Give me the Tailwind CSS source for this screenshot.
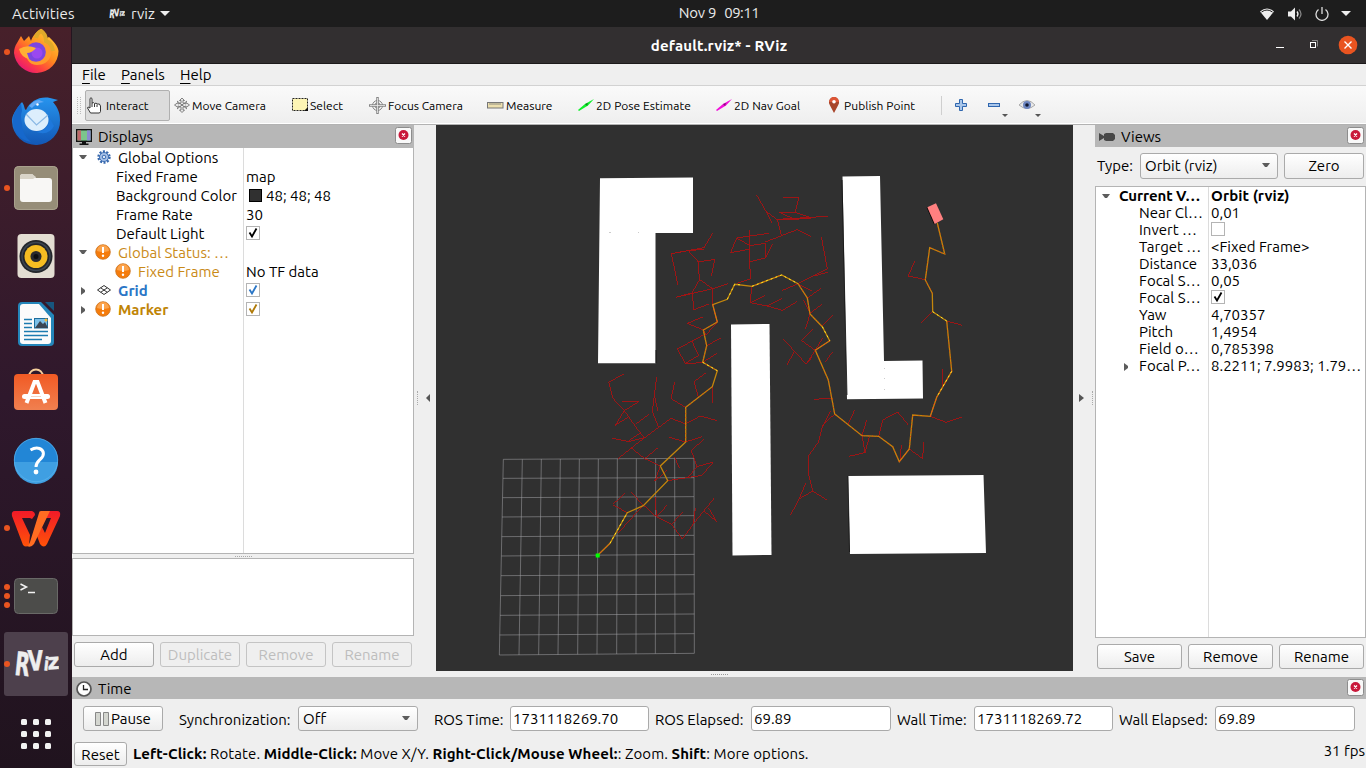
<!DOCTYPE html>
<html lang="en">
<head>
<meta charset="utf-8">
<title>default.rviz* - RViz</title>
<script src="https://cdn.jsdelivr.net/npm/@tailwindcss/browser@4"></script>
</head>
<body class="w-[1366px] h-[768px] overflow-hidden flex flex-col bg-[#efefef] text-black text-[15px] leading-[19px] font-[Ubuntu,'Noto_Sans',sans-serif] whitespace-nowrap">

<svg class="hidden">
  <symbol id="close" viewBox="0 0 17 17"><rect x=".5" y=".5" width="16" height="16" rx="2" fill="#f8f8f8" stroke="#8d8d8d"/><circle cx="8.500" cy="8" r="5" fill="#c9183a"/><path d="M7 6.500l3 3M10 6.500l-3 3" stroke="#fff" stroke-width="1.300"/></symbol>
  <symbol id="warn" viewBox="0 0 16 16"><circle cx="8" cy="8" r="7.300" fill="#f57c0c" stroke="#c9741f" stroke-width=".8"/><path d="M2 7a6 6 0 0 1 12 0q-6 2-12 0" fill="#fba34c"/><path d="M8 3v6" stroke="#fff" stroke-width="2"/><circle cx="8" cy="11.800" r="1.200" fill="#fff"/></symbol>
  <symbol id="down" viewBox="0 0 8 5"><path d="M0 0h8L5 4H3z" fill="#5c5c5c"/></symbol>
  <symbol id="right" viewBox="0 0 4 8"><path d="M0 0v8L4 5V3z" fill="#5c5c5c"/></symbol>
  <symbol id="check" viewBox="0 0 14 14"><rect x=".5" y=".5" width="13" height="13" fill="#fff" stroke="#b4b4b4"/><path d="M3.500 6.500l2.500 4 4.500-8" fill="none" stroke="currentColor" stroke-width="1.800"/></symbol>
  <symbol id="rvizlogo" viewBox="0 0 44 28"><g fill="#eee" stroke="#eee" stroke-width=".4" font-family="DejaVu Sans Condensed, DejaVu Sans" font-weight="bold"><text transform="translate(0 24) rotate(6) scale(.8 1.220)" font-size="26">R</text><text transform="translate(14 20) rotate(-3) scale(.88 1.100)" font-size="25">V</text><text transform="translate(28.500 19.500) rotate(6) scale(.9 1)" font-size="18">i</text><text transform="translate(33 19) rotate(-2) scale(1.050 1.050)" font-size="21">z</text></g></symbol>
</svg>

<header class="h-[27px] shrink-0 bg-[#1d1d1d] text-[#eaeaea] grid grid-cols-[1fr_auto_1fr] items-center">
  <div class="flex items-center pl-[12px]">
    <span class="w-[97px] pb-[1px] tracking-[0.1px]">Activities</span>
    <svg class="w-[16px] h-[12px] mr-[6px]"><use href="#rvizlogo"/></svg>
    <span class="w-[29px] pb-[1px]">rviz</span>
    <svg class="w-[10px] h-[6px]" viewBox="0 0 10 6"><path d="M0 0h10L5 5z" fill="#eee"/></svg>
  </div>
  <div class="pl-[72px] pb-[2px] flex gap-[8px]"><span class="tracking-[-0.25px]">Nov 9</span><span class="tracking-[-0.5px]">09:11</span></div>
  <div class="flex items-center justify-end pr-[15px]">
    <svg class="w-[16px] h-[14px] mr-[12px]" viewBox="0 0 16 14"><path d="M1 4.500Q8-1.500 15 4.500L8 13z" fill="#eee"/><path d="M2.500 5Q8 1 13.500 5" stroke="#1d1d1d" stroke-width="1" fill="none"/></svg>
    <svg class="w-[16px] h-[14px] mr-[12px]" viewBox="0 0 16 14"><path d="M1 4.500h3l4-4v13l-4-4H1z" fill="#eee"/><path d="M10 4.500q2 2.500 0 5" stroke="#eee" stroke-width="1.300" fill="none"/><path d="M12 2.500q4 4.500 0 9" stroke="#888" stroke-width="1.200" fill="none"/></svg>
    <svg class="w-[14px] h-[14px] mr-[12px]" viewBox="0 0 14 14"><path d="M3.500 2.500a6 6 0 1 0 7 0M7 0v7" stroke="#ddd" stroke-width="1.300" fill="none"/></svg>
    <svg class="w-[10px] h-[6px]" viewBox="0 0 10 6"><path d="M0 0h10L5 5z" fill="#eee"/></svg>
  </div>
</header>

<div class="flex flex-1 min-h-0">
  <!-- Launcher -->
  <nav class="w-[72px] shrink-0 bg-linear-to-b from-[#47202a] via-[#2f182c] to-[#20131e] border-r border-[#241520]">
    <svg class="w-[72px] h-[741px]" viewBox="0 27 72 741">
      <defs>
        <linearGradient id="ff" x1="1" y1="0" x2="0.200" y2="1"><stop offset="0" stop-color="#ffe13c"/><stop offset=".5" stop-color="#ff8a1e"/><stop offset=".75" stop-color="#ff4040"/><stop offset="1" stop-color="#e4107c"/></linearGradient>
        <linearGradient id="tb" x1="0" y1="0" x2="0" y2="1"><stop offset="0" stop-color="#2794ee"/><stop offset="1" stop-color="#1257b5"/></linearGradient>
        <linearGradient id="sw" x1="0" y1="0" x2="0" y2="1"><stop offset="0" stop-color="#f15a24"/><stop offset="1" stop-color="#f08050"/></linearGradient>
        <linearGradient id="wps" x1="0" y1="0" x2="0" y2="1"><stop offset="0" stop-color="#f21a28"/><stop offset="1" stop-color="#ff5208"/></linearGradient>
      </defs>
      <g fill="#e95420"><circle cx="7" cy="52" r="3"/><circle cx="7" cy="188" r="3"/><circle cx="7" cy="528" r="3"/><circle cx="7" cy="587" r="3"/><circle cx="7" cy="596" r="3"/><circle cx="7" cy="605" r="3"/></g>
      <!-- Firefox -->
      <path d="M17 43l4-7 3 5 5-5 2 5c1-3 3-8 10-12 3 1 5 7 6 9l2-1c5 5 9 9 9.500 14A22.300 22 0 0 1 14 53c0-4 1-7 3-10z" fill="url(#ff)"/>
      <path d="M35 41c5-2 8 1 10 4 2-1 0-4-1-6 6 3 9 9 7 16s-8 10-14 10-10-4-11-10z" fill="#ff9a2c"/>
      <circle cx="36" cy="52" r="9.800" fill="#7b45e0"/><circle cx="37" cy="53" r="5.500" fill="#9a48f0"/>
      <path d="M19 49q8-5 17-1-4 5-9 5l2 6q-8-2-10-10z" fill="#ffb034"/>
      <path d="M36 38q1-5 5-7 5 3 5 10 6 2 7 10" fill="none" stroke="#dfa92a" stroke-width="4"/>
      <!-- Thunderbird -->
      <path d="M22 102c3 4 2 7 4 8 4-9 14-14 24-12l8 2-5 2c5 6 7 11 7 18a23.500 23.500 0 0 1-48 2c-1-7 5-13 10-20z" fill="url(#tb)"/>
      <path d="M21 103q-9 10-8 19 2 17 18 20-9-7-9-18-2-8 0-13z" fill="#1668cc"/>
      <ellipse cx="36.500" cy="120" rx="12" ry="11" fill="#dceefc"/><path d="M26 114l10.500 11L48 115" fill="none" stroke="#8ab8e4" stroke-width="1.200"/>
      <path d="M50 119q-2 12-14 13 13 4 18-6z" fill="#1e78dc"/><path d="M29 106q5-6 10-6l5 2q-8 1-12 6" fill="#62a8f4"/><circle cx="37.500" cy="104.500" r="1.200" fill="#fff"/>
      <!-- Files -->
      <rect x="14" y="166" width="44" height="44" rx="5" fill="#968d78"/><rect x="14.500" y="166.500" width="43" height="43" rx="4" fill="none" stroke="#a9a18d"/>
      <path d="M20 177q0-3 3-3h9l4 4h13q3 0 3 3v18q0 3-3 3H23q-3 0-3-3z" fill="#f8f7f5"/><path d="M20 179v-2q0-3 3-3h9l4 3-3 2z" fill="#d9d4c8"/>
      <!-- Rhythmbox -->
      <rect x="17.500" y="234" width="37" height="44" rx="4" fill="#e3ddd2"/><circle cx="36" cy="256.500" r="16.500" fill="#23262a"/><circle cx="36" cy="256.500" r="14" fill="none" stroke="#3c4550" stroke-width="1.500"/><circle cx="36" cy="256.500" r="11.500" fill="#f5bd22"/><circle cx="36" cy="256.500" r="5.500" fill="#2a2a2e"/><circle cx="36" cy="256.500" r="2.500" fill="#0e0e10"/>
      <!-- Writer -->
      <path d="M22 302h19l13 13v27q0 4-4 4H22q-4 0-4-4v-36q0-4 4-4z" fill="#2486ba"/><path d="M23 304h16l12 14v23q0 3-3 3H23q-3 0-3-3v-34q0-3 3-3z" fill="#fbfbfb"/><path d="M45 302h9v9z" fill="#17567f"/>
      <path d="M24 319.500h8M24 323.500h8M24 327.500h8M24 331.500h24M24 335.500h24M24 339.500h18" stroke="#1c7bb0" stroke-width="1.700"/><rect x="34.500" y="318.500" width="13" height="9.500" fill="#7cc0e8" stroke="#1c6d9c"/><path d="M35 328l5-7 3 3 2-2 3 6z" fill="#3a4654"/><circle cx="46" cy="320" r="1.500" fill="#f3b83a"/>
      <!-- Software -->
      <path d="M29 377c0-10 14-10 14 0" fill="none" stroke="#f6cf9c" stroke-width="2"/><rect x="14" y="374" width="44" height="36" rx="4" fill="url(#sw)"/><path d="M26.500 403l8-21h3l8 21" stroke="#fff" stroke-width="4" fill="none"/><path d="M24.500 396.500h23" stroke="#fff" stroke-width="5" stroke-linecap="round"/><path d="M31 396.500h10" stroke="#f6d4c4" stroke-width="1"/>
      <!-- Help -->
      <circle cx="36" cy="460" r="22" fill="#2286d6"/><path d="M14 462a22 22 0 0 0 44 0z" fill="#3f9fe2"/><circle cx="36" cy="460" r="21.700" fill="none" stroke="#5cb4ee" stroke-width=".7"/><path d="M30.500 450q5-3 9-1.500c5 2 5 7 1 10.500-3 3-4.500 4-4.500 8" fill="none" stroke="#fff" stroke-width="3"/><circle cx="36" cy="472" r="2.400" fill="#fff"/>
      <!-- WPS -->
      <path d="M15 511h17q3 1 3 4l-3 4-2-1h-8l8 17-1 10q-3 3-6 0L12 516q-1-5 3-5z" fill="url(#wps)"/>
      <path d="M45 511h12q4 0 3 5L47 544q-3 5-7 0l-3-8 5-9 3 6 6-15h-8z" fill="url(#wps)"/>
      <path d="M41 511h9L34 544q-3 4-7 2 2-1 3-4l9-29q0-2 2-2z" fill="#ff6d22"/>
      <!-- Terminal -->
      <rect x="14.500" y="578.500" width="43" height="35" rx="4" fill="#4c4c4a" stroke="#696967"/><path d="M20.500 584l6 3-6 3M28 592.500h7" fill="none" stroke="#f3f3f3" stroke-width="1.500"/>
      <!-- Running RViz -->
      <rect x="4" y="632" width="64" height="64" rx="3" fill="#4d404c"/><circle cx="7" cy="664" r="3" fill="#e95420"/>
      <use href="#rvizlogo" x="14" y="650" width="45" height="29"/>
      <!-- App grid -->
      <g fill="#f2f2f2"><rect x="21" y="719" width="6" height="6" rx="1.500"/><rect x="33" y="719" width="6" height="6" rx="1.500"/><rect x="45" y="719" width="6" height="6" rx="1.500"/><rect x="21" y="731" width="6" height="6" rx="1.500"/><rect x="33" y="731" width="6" height="6" rx="1.500"/><rect x="45" y="731" width="6" height="6" rx="1.500"/><rect x="21" y="743" width="6" height="6" rx="1.500"/><rect x="33" y="743" width="6" height="6" rx="1.500"/><rect x="45" y="743" width="6" height="6" rx="1.500"/></g>
    </svg>
  </nav>

  <main class="w-[1294px] flex flex-col">
    <!-- Title bar -->
    <div class="h-[37px] shrink-0 bg-[#322f30] border-b border-[#1c1a1b] text-white font-bold grid grid-cols-[1fr_auto_1fr] items-center">
      <span></span><span class="tracking-[0.15px]">default.rviz* - RViz</span>
      <svg class="justify-self-end w-[100px] h-[36px]" viewBox="1266 27 100 36"><path d="M1276 47.500h8" stroke="#fff"/><rect x="1310.500" y="42.500" width="5" height="5" fill="none" stroke="#fff"/><path d="M1312 40.500h5.500v6" fill="none" stroke="#aaa" stroke-width=".7"/><circle cx="1348" cy="45" r="9.300" fill="#e95420"/><path d="M1344.500 41.500l7 7m0-7l-7 7" stroke="#fff" stroke-width="1.400"/></svg>
    </div>
    <!-- Menu -->
    <div class="h-[22px] shrink-0 border-b border-[#d2d2d2] flex items-center pl-[10px]">
      <span class="w-[39px]"><span class="underline underline-offset-[3px] decoration-1">F</span>ile</span><span class="w-[59px]"><span class="underline underline-offset-[3px] decoration-1">P</span>anels</span><span><span class="underline underline-offset-[3px] decoration-1">H</span>elp</span>
    </div>
    <!-- Toolbar -->
    <div class="h-[39px] shrink-0 bg-linear-to-b from-[#fafafa] to-[#eeeeee] border-b border-[#b2b2b2] flex items-center text-[12px] shadow-[inset_0_-1px_0_#fff]">
      <div class="w-[13px] flex gap-[2px] pl-[5px]"><i class="h-[17px] border-l border-dotted border-[#bbb]"></i><i class="h-[17px] border-l border-dotted border-[#bbb]"></i></div>
      <div class="w-[85px] mr-[4px] h-[31px] rounded-[2px] border border-[#b0b0b0] bg-[#dcdcdc] flex items-center pl-[1px]">
        <svg class="w-[17px] h-[17px] mr-[2px]" viewBox="1.500 0 17 17"><path d="M4.500 9V1.500q1-1.500 2 0V6q2-1 2.500.500 2-1 2.500.500 3-1 3.500 2v5.500l-1 1.500H5L2 11q0-2 2.500 0z" fill="#fff" stroke="#333"/><path d="M6.500 6v4M9 7v3M11.500 7.500V10" stroke="#333"/></svg>
        <span class="tracking-[0.05px]">Interact</span>
      </div>
      <div class="w-[118px] flex items-center"><svg class="w-[16px] h-[16px] mr-[2px]" viewBox="0 0 16 16"><path d="M8 1l2.500 2.500H9V6l3 1V5.500L15.500 8 12 10.500V9L9 10v3h1.500L8 15.500 5.500 13H7v-3L4 9v1.500L.5 8 4 5.500V7l3-1V3.500H5.500z" fill="#e8e8e8" stroke="#666" stroke-width=".8"/><path d="M3 4l10 8M3 12l10-8" stroke="#777"/></svg><span>Move Camera</span></div>
      <div class="w-[77px] flex items-center"><svg class="w-[17px] h-[14px] mr-[1px]" viewBox="0 0 17 14"><rect x=".5" y=".5" width="15" height="12" fill="#fdf5b5" stroke="#222" stroke-dasharray="2 1"/><path d="M12 13h4V9z" fill="#111"/></svg><span>Select</span></div>
      <div class="w-[118px] flex items-center"><svg class="w-[17px] h-[17px] mr-[2px]" viewBox="0 0 17 17"><g fill="none" stroke="#858585"><circle cx="8.500" cy="8.500" r="5"/><circle cx="8.500" cy="8.500" r="2.700"/><path d="M8.500 0v17M0 8.500h17" stroke-width="2.500"/><path d="M8.500 1v15M1 8.500h15" stroke="#eee" stroke-width=".8"/></g></svg><span>Focus Camera</span></div>
      <div class="w-[91px] flex items-center"><svg class="w-[17px] h-[7px] mr-[2px]" viewBox="0 0 17 7"><rect x=".5" y=".5" width="15.500" height="5.500" fill="#ecdfae" stroke="#777"/><path d="M3 1v2M5 1v2M7 1v2M9 1v2M11 1v2M13 1v2" stroke="#777" stroke-width=".8"/></svg><span>Measure</span></div>
      <div class="w-[138px] flex items-center"><svg class="w-[16px] h-[14px] mr-[2px]" viewBox="0 0 16 14"><path d="M0 12L7 6 16 1 10 7.500 1 13z" fill="#11f02c"/><path d="M7 6l3-1-1 3z" fill="#0a8a1c"/></svg><span class="tracking-[0.05px]">2D Pose Estimate</span></div>
      <div class="w-[112px] flex items-center"><svg class="w-[16px] h-[14px] mr-[2px]" viewBox="0 0 16 14"><path d="M0 12L7 6 16 1 10 7.500 1 13z" fill="#f00fd8"/><path d="M7 6l3-1-1 3z" fill="#8a0a7c"/></svg><span class="tracking-[0.05px]">2D Nav Goal</span></div>
      <div class="w-[113px] flex items-center"><svg class="w-[12px] h-[16px] mr-[4px]" viewBox="0 0 12 16"><path d="M6 16L2 8.500Q.5 6 1 4.500 2 0 6 0t5 4.500Q11.500 6 10 8.500z" fill="#a8452a"/><path d="M1 5Q2 0 6 0t5 5z" fill="#dd5536"/><circle cx="6" cy="4.700" r="1.800" fill="#fff"/></svg><span class="tracking-[0.05px]">Publish Point</span></div>
      <div class="w-px h-[19px] bg-[#cfcfcf] mr-[13px]"></div>
      <svg class="w-[12px] h-[12px] mr-[21px]" viewBox="0 0 12 12"><path d="M4.500.5h3v4h4v3h-4v4h-3v-4h-4v-3h4z" fill="#a9c6ea" stroke="#2f66ae"/></svg>
      <svg class="w-[21px] h-[24px] mr-[10px]" viewBox="0 0 21 24"><rect x=".5" y="10.500" width="11" height="3" fill="#a9c6ea" stroke="#2f66ae"/><path d="M14 21h6l-3 3z" fill="#555"/></svg>
      <svg class="w-[22px] h-[24px]" viewBox="0 0 22 24"><path d="M0 12Q8 3 16 12 8 19 0 12z" fill="#e9e9e9" stroke="#aaa"/><circle cx="8" cy="12" r="4" fill="#6d86c0"/><circle cx="8" cy="12" r="1.800" fill="#101830"/><path d="M16 21h6l-3 3z" fill="#555"/></svg>
    </div>

    <div class="h-[552px] shrink-0 flex">
      <!-- Displays -->
      <section class="w-[342px] shrink-0 flex flex-col">
        <div class="h-[23px] bg-[#b7b7b7] flex items-center pl-[4px] pr-[2px]">
          <svg class="w-[16px] h-[16px] mr-[6px]" viewBox="0 0 16 16"><rect x=".7" y=".7" width="14.600" height="11.600" fill="#7cc48c" stroke="#111" stroke-width="1.400"/><path d="M1.400 1.400H5v10H1.400z" fill="#c0686c"/><path d="M11 1.400h3.600v10H11z" fill="#8a8ad0"/><path d="M6 13h4v1.500H6zM3.500 14.500h9V16h-9z" fill="#111"/></svg>
          <span class="flex-1">Displays</span><svg class="w-[17px] h-[17px] mb-[3px]"><use href="#close"/></svg>
        </div>
        <div class="h-[406px] bg-white border border-t-0 border-[#b4b4b4] flex">
          <div class="w-[171px] border-r border-[#dcdcdc] flex flex-col">
            <div class="h-[19px] flex items-center pl-[6px]"><svg class="w-[8px] h-[5px] mr-[10px]"><use href="#down"/></svg><svg class="w-[14px] h-[14px] mr-[7px] -mt-[2px]" viewBox="0 0 14 14"><circle cx="7" cy="7" r="5.500" fill="none" stroke="#3567ad" stroke-width="2.400" stroke-dasharray="2 1.450"/><circle cx="7" cy="7" r="4.500" fill="#a8c2e8" stroke="#3c6db2"/><circle cx="7" cy="7" r="1.800" fill="#d9e6f7" stroke="#3c6db2"/></svg>Global Options</div>
            <div class="h-[19px] pl-[43px]">Fixed Frame</div>
            <div class="h-[19px] pl-[43px] tracking-[0.05px]">Background Color</div>
            <div class="h-[19px] pl-[43px]">Frame Rate</div>
            <div class="h-[19px] pl-[43px]">Default Light</div>
            <div class="h-[19px] flex items-center pl-[6px] text-[#c98a17]"><svg class="w-[8px] h-[5px] mr-[8px]"><use href="#down"/></svg><svg class="w-[16px] h-[16px] mr-[7px] -mt-[2px]"><use href="#warn"/></svg>Global Status: …</div>
            <div class="h-[19px] flex items-center pl-[42px] text-[#c98a17]"><svg class="w-[16px] h-[16px] mr-[7px] -mt-[2px]"><use href="#warn"/></svg>Fixed Frame</div>
            <div class="h-[19px] flex items-center pl-[8px] font-bold text-[#2a76c6]"><svg class="w-[4px] h-[8px] mr-[12px]"><use href="#right"/></svg><svg class="w-[14px] h-[10px] mr-[7px] -mt-[2px]" viewBox="0 0 14 10"><path d="M7 .5L13.500 5 7 9.500.5 5zM3.700 2.800L10.300 7.300M10.300 2.800L3.700 7.300" fill="none" stroke="#333"/></svg>Grid</div>
            <div class="h-[19px] flex items-center pl-[8px] font-bold text-[#c08404]"><svg class="w-[4px] h-[8px] mr-[10px]"><use href="#right"/></svg><svg class="w-[16px] h-[16px] mr-[7px] -mt-[2px]"><use href="#warn"/></svg>Marker</div>
          </div>
          <div class="pl-[2px] pt-[19px] flex flex-col">
            <div class="h-[19px]">map</div>
            <div class="h-[19px] flex items-center"><i class="w-[13px] h-[13px] bg-[#303030] border border-black ml-[3px] mr-[4px]"></i>48; 48; 48</div>
            <div class="h-[19px]">30</div>
            <div class="h-[19px] flex items-center pb-[1px]"><svg class="w-[14px] h-[14px]"><use href="#check"/></svg></div>
            <div class="h-[19px]"></div>
            <div class="h-[19px]">No TF data</div>
            <div class="h-[19px] flex items-center pb-[1px] text-[#2a76c6]"><svg class="w-[14px] h-[14px]"><use href="#check"/></svg></div>
            <div class="h-[19px] flex items-center pb-[1px] text-[#b07a08]"><svg class="w-[14px] h-[14px]"><use href="#check"/></svg></div>
          </div>
        </div>
        <div class="h-[4px] flex items-center justify-center"><i class="w-[17px] border-t border-dotted border-[#aaa]"></i></div>
        <div class="h-[78px] bg-white border border-[#b4b4b4]"></div>
        <div class="flex gap-[6px] pl-[2px] pt-[6px] text-center leading-[23px]">
          <div class="w-[80px] h-[25px] rounded-[3px] border border-[#aaa] bg-linear-to-b from-white to-[#ededed]">Add</div>
          <div class="w-[80px] h-[25px] rounded-[3px] border border-[#c4c4c4] text-[#bdbdbd]">Duplicate</div>
          <div class="w-[80px] h-[25px] rounded-[3px] border border-[#c4c4c4] text-[#bdbdbd]">Remove</div>
          <div class="w-[80px] h-[25px] rounded-[3px] border border-[#c4c4c4] text-[#bdbdbd]">Rename</div>
        </div>
      </section>
      <div class="w-[22px] shrink-0 flex items-center justify-between pl-[3px] pr-[6px] pb-[6px]"><i class="h-[14px] border-l border-dotted border-[#aaa]"></i><svg class="w-[4px] h-[8px]" viewBox="0 0 4 8"><path d="M4 0v8L0 4z" fill="#555"/></svg></div>

      <!-- 3D view -->
      <div class="w-[637px] shrink-0">
      <svg class="block w-[637px] h-[546px] bg-[#303030]" viewBox="436 125 637 546" fill="none">
        <g transform="translate(490 350) scale(.33333)" stroke="#a0a0a4" stroke-opacity=".55" stroke-width="3">
          <path d="M40 328L612 325M39 385L612 383M38 443L612 440M36 501L612 497M35 560L612 556M34 618L613 613M33 677L613 674M32 737L613 732M30 796L613 792M29 855L613 851M28 915L613 910"/>
          <path d="M40 328L28 915M97 328L87 915M154 327L146 914M211 327L204 914M268 327L263 913M325 327L321 913M382 326L380 912M439 326L438 912M497 326L496 911M554 325L555 911M612 325L613 910"/>
        </g>
        <g fill="#fff">
          <path d="M600 178.300L693 177.400V233H655.500V363.300H598z"/>
          <path d="M731 324.500L769.500 324 771.500 555 732.500 555.500z"/>
          <path d="M842.500 176.500L880 176 884 361 922.500 360.500 923 398.500 847 399.300z"/>
          <path d="M848 476L983.500 475 986 553 850 554z"/>
        </g>
        <path d="M609 232.500h2M638 232.500h1M884.500 368v1M884.500 378v1M884.500 389v1" stroke="#ccc"/>
        <path d="M656 350v13M842 180l5 215M848 476l1.500 76" stroke="#111" stroke-width=".8"/>
        <g stroke="#a81212" stroke-width="2.700" shape-rendering="crispEdges">
          <path transform="translate(590 170) scale(.33333)" d="M500 75L528 124 546 160M578 82H627L615 127M568 127H615L662 143M528 124L562 149 663 146M568 127L610 146 660 145M562 148L713 139M562 149L574 195M526 216L621 179 663 200M694 200L712 296 624 341 576 362M673 318L715 306M478 180V270L482 326 440 340M422 248L440 204 536 190M440 204L480 227 526 220V264L548 222M422 248L476 238M478 276L526 264M368 190L342 233 244 251 264 346M342 238L295 242 325 276 328 330 306 369 257 382M325 276L374 268 364 318M295 242L244 251M328 328L368 356 415 341M257 382L368 356M306 369L312 419 357 402M368 356V404M292 460L340 440M292 460L340 480 348 495 382 456M484 350L482 398 525 377M482 398L532 408 578 421 622 394M532 408L576 385M640 390L660 430 697 402M652 384L692 356M660 432L646 478M624 341L665 363M340 495L262 537 286 580 326 556 306 514M286 582L338 577 381 550M350 527L392 504M728 435L697 468M580 508L614 544 590 586M614 544L648 582 668 560M676 541L635 512 668 478M697 505L676 541 648 582M728 545L706 576"/>
          <path transform="translate(490 350) scale(.33333)" d="M401 73L356 96 368 144 403 182 446 243 464 263 424 294 384 326M397 154L446 155 403 182 376 226 416 200M438 222L476 194M365 264L416 275 464 263 543 205 587 222 631 198 681 212M416 272L453 248M500 82L493 137 487 185 505 230M493 137L504 182M554 97L543 146 587 172M649 68L612 95 625 141M668 110L669 160M424 294L464 326 511 348M464 326L503 294M538 262L586 276 636 260M642 267L604 302 621 350 670 336 636 376 533 392M621 350L592 385M553 320L568 353M511 348L494 394 530 362M404 430L368 464 412 488M421 425L460 465 499 500 545 523 577 567 610 522 616 475M496 440L499 500 533 464M545 523L578 486M610 522L672 445M641 482L680 515 656 474M460 465L384 550"/>
          <path transform="translate(740 190) scale(.33333)" d="M222 628L280 624M272 663L248 710M284 672L248 706 236 755 205 798V848L218 903 262 931M218 903L177 927 152 975M197 880L177 927M323 706L344 660M366 737L380 690M366 737L375 788 388 741M375 788L326 799M416 739L428 690 473 666 506 706M484 766L480 810M508 777L548 806 551 756M571 679L618 697 665 681M608 538V587M524 214L505 258 556 269M578 365L543 398M620 393L667 406"/>
        </g>
        <path d="M597.700 555.300L610 543.300 627.300 512.700 643.300 505.700 667.700 480.700 660.300 466 685.700 442V407.300L712.300 386.700 717.300 370.700 702.700 362.300 706.700 345.700 703.300 330 717.300 322 712.700 304.700 727.300 299.300 734.700 284.300 752 286.300 781.700 275 798 283.700 807.300 298 810 314 822.300 326.700 829.700 340.700 815.300 350.300 828.300 380 834.700 414 862 435.700 878.700 436.300 892.700 446.700 899.300 461.700 909.300 449 912.700 415 930.300 416.300 936.700 397.300 951.700 371.300 946.700 321 932.700 311.700 932.300 293.300 925.300 280 929.700 247.700 944.700 254 937.300 223" stroke="#c4860c" stroke-width="1.300"/>
        <path d="M685.700 442V407.300L712.300 386.700M717.300 370.700L702.700 362.300 706.700 345.700 703.300 330 717.300 322M752 286.300L781.700 275M798 283.700L807.300 298 810 314 822.300 326.700M815.300 350.300L828.300 380 834.700 414 862 435.700 878.700 436.300 892.700 446.700 899.300 461.700M909.300 449L912.700 415 930.300 416.300M951.700 371.300L946.700 321M932.300 293.300L925.300 280 929.700 247.700 944.700 254 937.300 223" stroke="#d8480f" stroke-width="1.100" stroke-dasharray="1 3"/>
        <path d="M597.700 555.300L610 543.300M717.300 322L712.700 304.700M899.300 461.700L909.300 449M930.300 416.300L936.700 397.300 951.700 371.300M829.700 340.700L815.300 350.300" stroke="#f04a18" stroke-dasharray="2 2"/>
        <path d="M610 543.300L627.300 512.700M702.700 362.300L717.300 370.700M727.300 299.300L734.700 284.300 742 285M752 286.300L781.700 275 798 283.700M822.300 326.700L829.700 340.700M932.700 311.700L946.700 321M951.700 371.300L936.700 397.300" stroke="#ffea28" stroke-dasharray="2 3"/>
        <rect x="595.700" y="553.500" width="4" height="4" fill="#0f0"/>
        <path d="M927.300 207.300L934.700 224 934 222z" fill="#000" stroke="#000" stroke-width="1.500"/>
        <path d="M927.300 207.300L936 203.300 943.300 219.300 934.700 224z" fill="#ff8080"/>
      </svg>
      <div class="h-[6px] flex items-center justify-center pr-[70px]"><i class="w-[17px] border-t border-dotted border-[#999]"></i></div>
      </div>

      <div class="w-[22px] shrink-0 flex items-center justify-between pl-[6px] pr-[2px] pb-[6px]"><svg class="w-[5px] h-[8px]" viewBox="0 0 5 8"><path d="M0 0v8l5-4z" fill="#555"/></svg><i class="h-[14px] border-l border-dotted border-[#aaa]"></i></div>

      <!-- Views -->
      <section class="w-[271px] shrink-0 flex flex-col">
        <div class="h-[22px] shrink-0 bg-[#b7b7b7] flex items-center pl-[4px] pr-[2px]">
          <svg class="w-[16px] h-[8px] mr-[6px] mt-[2px]" viewBox="0 0 16 8"><path d="M0 0l5 3V1l2-1h7l2 2v4l-2 2H7L5 7V5L0 8z" fill="#484848"/></svg>
          <span class="flex-1">Views</span><svg class="w-[17px] h-[17px] mb-[2px]"><use href="#close"/></svg>
        </div>
        <div class="flex pl-[2px] pt-[6px] leading-[23px]">
          <span class="w-[43px] pt-[1px]">Type:</span>
          <div class="w-[138px] h-[26px] mr-[6px] rounded-[3px] border border-[#aaa] bg-linear-to-b from-white to-[#ededed] flex items-center pl-[4px] pr-[7px] pb-[1px]"><span class="flex-1">Orbit (rviz)</span><svg class="w-[8px] h-[5px]"><use href="#down"/></svg></div>
          <div class="w-[80px] h-[26px] rounded-[3px] border border-[#aaa] bg-linear-to-b from-white to-[#ededed] text-center">Zero</div>
        </div>
        <div class="mt-[7px] h-[452px] shrink-0 bg-white border border-[#b4b4b4] flex leading-[15px] pt-[1px]">
          <div class="w-[113px] -mt-[1px] pt-[1px] border-r border-[#dcdcdc] flex flex-col">
            <div class="h-[17px] flex items-center pl-[6px] font-bold"><svg class="w-[8px] h-[5px] mr-[9px]"><use href="#down"/></svg><span class="pb-[2px] tracking-[-0.1px]">Current V…</span></div>
            <div class="h-[17px] pl-[43px]">Near Cl…</div><div class="h-[17px] pl-[43px]">Invert …</div><div class="h-[17px] pl-[43px]">Target …</div><div class="h-[17px] pl-[43px]">Distance</div><div class="h-[17px] pl-[43px]">Focal S…</div><div class="h-[17px] pl-[43px]">Focal S…</div><div class="h-[17px] pl-[43px]">Yaw</div><div class="h-[17px] pl-[43px]">Pitch</div><div class="h-[17px] pl-[43px]">Field o…</div>
            <div class="h-[17px] flex items-center pl-[28px]"><svg class="w-[4px] h-[8px] mr-[11px]"><use href="#right"/></svg><span class="pb-[2px]">Focal P…</span></div>
          </div>
          <div class="pl-[2px]">
            <div class="h-[17px] font-bold tracking-[0.1px]">Orbit (rviz)</div><div class="h-[17px]">0,01</div>
            <div class="h-[17px]"><i class="block w-[14px] h-[14px] border border-[#b4b4b4]"></i></div>
            <div class="h-[17px]">&lt;Fixed Frame&gt;</div><div class="h-[17px]">33,036</div><div class="h-[17px]">0,05</div>
            <div class="h-[17px]"><svg class="w-[14px] h-[14px]"><use href="#check"/></svg></div>
            <div class="h-[17px]">4,70357</div><div class="h-[17px]">1,4954</div><div class="h-[17px]">0,785398</div><div class="h-[17px]">8.2211; 7.9983; 1.79…</div>
          </div>
        </div>
        <div class="flex gap-[6px] pl-[2px] pt-[6px] text-center leading-[23px]">
          <div class="w-[85px] h-[25px] rounded-[3px] border border-[#aaa] bg-linear-to-b from-white to-[#ededed]">Save</div>
          <div class="w-[85px] h-[25px] rounded-[3px] border border-[#aaa] bg-linear-to-b from-white to-[#ededed]">Remove</div>
          <div class="w-[85px] h-[25px] rounded-[3px] border border-[#aaa] bg-linear-to-b from-white to-[#ededed]">Rename</div>
        </div>
      </section>
    </div>

    <!-- Time -->
    <div class="h-[22px] shrink-0 bg-[#b7b7b7] flex items-center pl-[4px] pr-[2px]">
      <svg class="w-[16px] h-[16px] mr-[6px] mt-[1px]" viewBox="0 0 16 16"><circle cx="8" cy="8" r="7" fill="#fff" stroke="#555" stroke-width="1.700"/><path d="M7.500 4v4.500H12" fill="none" stroke="#222" stroke-width="1.300"/></svg>
      <span class="flex-1">Time</span><svg class="w-[17px] h-[17px] mb-[2px]"><use href="#close"/></svg>
    </div>
    <div class="mt-[7px] h-[25px] shrink-0 flex items-center pl-[11px]">
      <div class="w-[80px] h-[25px] rounded-[3px] border border-[#aaa] bg-linear-to-b from-white to-[#ededed] flex items-center pl-[11px]"><svg class="w-[15px] h-[14px] mr-[1px]" viewBox="0 0 15 14"><path d="M.5.5h5v13h-5zM8.500.5h5v13h-5z" fill="#d4d6d0" stroke="#888"/></svg>Pause</div>
      <span class="ml-[16px] w-[119px] pt-[1px] tracking-[0.05px]">Synchronization:</span>
      <div class="w-[120px] h-[25px] rounded-[3px] border border-[#aaa] bg-linear-to-b from-white to-[#ededed] flex items-center pl-[4px] pr-[7px]"><span class="flex-1">Off</span><svg class="w-[8px] h-[5px]"><use href="#down"/></svg></div>
      <span class="ml-[16px] w-[76px] pt-[1px]">ROS Time:</span>
      <div class="w-[139px] h-[25px] rounded-[3px] border border-[#aaa] bg-white pl-[2px] leading-[23px]">1731118269.70</div>
      <span class="ml-[6px] w-[96px] pt-[1px]">ROS Elapsed:</span>
      <div class="w-[140px] h-[25px] rounded-[3px] border border-[#aaa] bg-white pl-[2px] leading-[23px]">69.89</div>
      <span class="ml-[6px] w-[77px] pt-[1px]">Wall Time:</span>
      <div class="w-[139px] h-[25px] rounded-[3px] border border-[#aaa] bg-white pl-[2px] leading-[23px]">1731118269.72</div>
      <span class="ml-[6px] w-[96px] pt-[1px]">Wall Elapsed:</span>
      <div class="w-[140px] h-[25px] rounded-[3px] border border-[#aaa] bg-white pl-[2px] leading-[23px]">69.89</div>
    </div>
    <div class="mt-[11px] h-[25px] shrink-0 flex pl-[2px] pr-[1px]">
      <div class="w-[53px] h-[24px] mr-[6px] rounded-[3px] border border-[#aaa] bg-linear-to-b from-white to-[#ededed] text-center leading-[23px]">Reset</div>
      <span class="flex-1 pt-[2px] tracking-[0.1px]"><b>Left-Click:</b> Rotate. <b>Middle-Click:</b> Move X/Y. <b>Right-Click/Mouse Wheel:</b>: Zoom. <b>Shift</b>: More options.</span>
      <span class="-mt-[1px]">31 fps</span>
    </div>
  </main>
</div>
</body>
</html>
